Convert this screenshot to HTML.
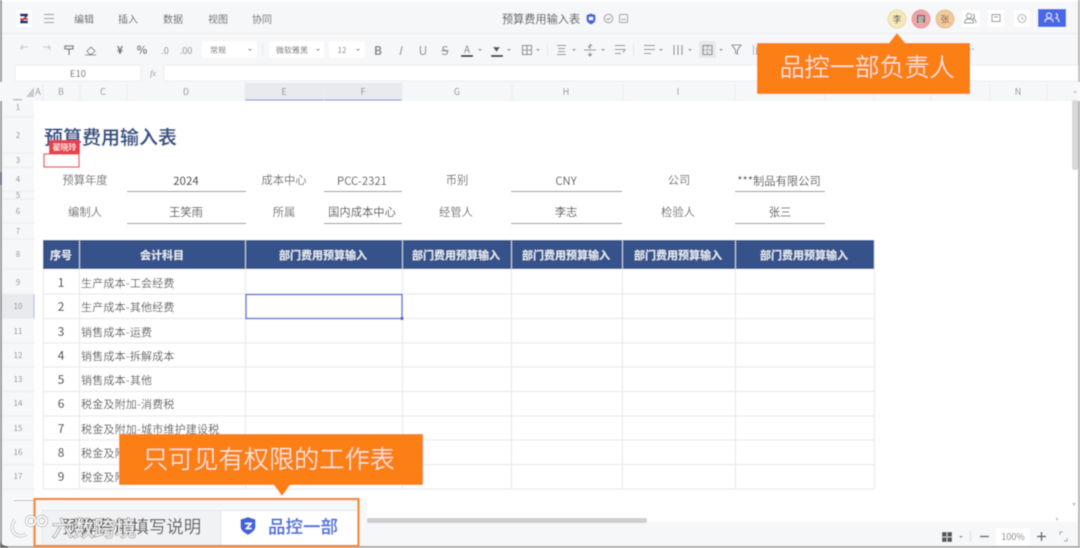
<!DOCTYPE html>
<html lang="zh"><head><meta charset="utf-8"><style>
html,body{margin:0;padding:0;background:#fff;width:1080px;height:548px;overflow:hidden}
svg{display:block;position:absolute;left:0;top:0}
text{font-family:"Noto Sans CJK SC","Liberation Sans",sans-serif}
.m{text-anchor:middle}
.t{fill:#585c63;font-size:10px}
.l{fill:#666;font-size:11.3px}
.v{fill:#444;font-size:11.3px}
.h{fill:#e8ecf4;font-size:11px;font-weight:700}
.n{fill:#555;font-size:12px;font-weight:500}
.c{fill:#555;font-size:11px;letter-spacing:.2px}
.r{fill:#8a8e95;font-size:8px}
.k{fill:#8a8e95;font-size:9px}
.s{stroke:#888;fill:none;stroke-width:1.1}
</style></head><body>
<svg width="1080" height="548" viewBox="0 0 1080 548" xmlns="http://www.w3.org/2000/svg">
<defs><filter id="b" x="0" y="0" width="100%" height="100%"><feGaussianBlur stdDeviation="0.5"/></filter></defs>
<g filter="url(#b)">
<rect width="1080" height="548" fill="#fff"/>
<rect y="2" width="1080" height="31" fill="#f6f7f9"/>
<rect y="33" width="1080" height="51" fill="#f6f7f9"/>
<line x1="0" y1="33.500" x2="1080" y2="33.500" stroke="#eceef1"/>
<rect x="0" y="0" width="2" height="548" fill="#9a9a9a"/>
<rect x="1078" y="0" width="2" height="548" fill="#b5b5b5"/>
<rect y="546" width="1080" height="2" fill="#aaa"/>

<!-- logo -->
<rect x="16" y="10" width="16" height="17" fill="#fff"/>
<path d="M20 13.500h8v2.500l-5 4.500h5v3h-8v-2.500l5-4.500h-5z" fill="#24357f"/><rect x="20" y="18" width="8" height="2" fill="#d8322c"/>
<path d="M44 14.500h10M44 18.500h10M44 22.500h10" stroke="#8a8e95"/>
<text x="84" y="23" class="m t">编辑</text>
<text x="128" y="23" class="m t">插入</text>
<text x="173" y="23" class="m t">数据</text>
<text x="218" y="23" class="m t">视图</text>
<text x="262" y="23" class="m t">协同</text>
<text x="541" y="23" class="m" style="font-size:11.200px;fill:#444">预算费用输入表</text>
<path d="M591 13.500l4.500 1.500v4.500c0 2.500-2 4-4.500 5c-2.500-1-4.500-2.500-4.500-5V15z" fill="#3f66e0"/><rect x="589" y="17" width="4" height="3" fill="#fff"/>
<circle cx="608.500" cy="18.500" r="4.300" fill="none" stroke="#999"/><path d="M606.500 18.500l1.500 1.500 2.500-2.500" stroke="#999" fill="none"/>
<rect x="619.500" y="14.500" width="8" height="8" rx="1" fill="none" stroke="#999"/><path d="M621 19.500h5" stroke="#999"/>

<!-- avatars -->
<circle cx="897" cy="19" r="9" fill="#f5e9bd" stroke="#ead9a0"/><text x="897" y="22.500" class="m" style="font-size:9px;fill:#444">李</text>
<circle cx="921" cy="19" r="9" fill="#efa4a8" stroke="#ea9296"/><rect x="917" y="15" width="8" height="8" rx="1" fill="#5a4a4a"/><text x="921" y="22" class="m" style="font-size:7px;fill:#eee">瞿</text>
<circle cx="945" cy="19" r="9" fill="#f1c99e" stroke="#eabb88"/><text x="945" y="22.500" class="m" style="font-size:9px;fill:#7a5c3a">张</text>
<rect x="962" y="10" width="18" height="17" fill="#fff"/>
<circle cx="969" cy="16" r="2.500" fill="none" stroke="#888"/><path d="M964.500 23c0-2.500 1.500-4 4.500-4s4.500 1.500 4.500 4zM973 14a2.500 2.500 0 0 1 0 4.500c1.500.5 3 2 3 4.500" fill="none" stroke="#888"/>
<rect x="988" y="10" width="16" height="17" fill="#fff"/><rect x="992" y="14.500" width="8" height="7" fill="none" stroke="#888"/><path d="M994 17h4" stroke="#888"/>
<rect x="1014" y="10" width="16" height="17" fill="#fff"/><circle cx="1022" cy="18.500" r="4" fill="none" stroke="#aaa"/><path d="M1022 16.500v2.500h2" stroke="#aaa" fill="none"/>
<rect x="1038" y="9" width="28" height="18" fill="#4a68e8"/><circle cx="1049" cy="15.500" r="2.500" fill="none" stroke="#dfe5fb"/><path d="M1045 22c0-2.500 1.500-3.500 4-3.500s4 1 4 3.500M1056 13.500a2.500 2.500 0 0 1 0 4.500c2 .5 3 1.500 3 4" fill="none" stroke="#dfe5fb"/>

<!-- toolbar -->
<path d="M21 50v-3h7M23 45l-2 2 2 2" stroke="#ccc" fill="none"/>
<path d="M50 50v-3h-7M48 45l2 2-2 2" stroke="#ccc" fill="none"/>
<path d="M65 46h8v3h-8zM69 49v6" stroke="#777" fill="none" stroke-width="1.300"/>
<path d="M87 51l4-4 4 4-3 3h-3zM85 55h11" stroke="#888" fill="none"/>
<text x="120" y="54" class="m" style="font-size:11px;fill:#666;font-weight:700">¥</text>
<text x="142" y="54" class="m" style="font-size:11px;fill:#666;font-weight:700">%</text>
<text x="165" y="54" class="m" style="font-size:9px;fill:#888">.0</text>
<text x="186" y="54" class="m" style="font-size:9px;fill:#888">.00</text>
<rect x="202" y="41" width="55" height="17" rx="2" fill="#fff"/><text x="218" y="53" class="m" style="font-size:8px;fill:#666">常规</text><path d="M248 49l2 2 2-2z" fill="#888"/>
<line x1="262.500" y1="44" x2="262.500" y2="55" stroke="#e3e5e8"/>
<rect x="269" y="41" width="55" height="17" rx="2" fill="#fff"/><text x="292" y="53" class="m" style="font-size:8px;fill:#666">微软雅黑</text><path d="M316 49l2 2 2-2z" fill="#888"/>
<rect x="329" y="41" width="36" height="17" rx="2" fill="#fff"/><text x="342" y="53" class="m" style="font-size:8px;fill:#777">12</text><path d="M356 49l2 2 2-2z" fill="#888"/>
<text x="378" y="55" class="m" style="font-size:12px;fill:#888;font-weight:700">B</text>
<text x="400" y="55" class="m" style="font-size:12px;fill:#888;font-style:italic">I</text>
<text x="423" y="55" class="m" style="font-size:12px;fill:#888">U</text>
<text x="445" y="55" class="m" style="font-size:12px;fill:#888;text-decoration:line-through">S</text>
<text x="467" y="53" class="m" style="font-size:10px;fill:#777">A</text><rect x="461" y="55" width="12" height="2" fill="#222"/><path d="M478 49l2 2 2-2z" fill="#888"/>
<path d="M493 47h7l-3.500 5z" fill="#555"/><rect x="491" y="55" width="12" height="2" fill="#222"/><path d="M507 49l2 2 2-2z" fill="#888"/>
<rect x="522.500" y="45.500" width="9" height="9" class="s"/><path d="M527 45.500v9M522.500 50h9" class="s"/><path d="M536 49l2 2 2-2z" fill="#888"/>
<line x1="547.500" y1="44" x2="547.500" y2="55" stroke="#e3e5e8"/>
<path d="M557 45.500h9M558 48.500h7M558 51.500h7M557 54.500h9" class="s"/><path d="M572 49l2 2 2-2z" fill="#888"/>
<path d="M590 44v4l-2-2M590 44l2 2M590 56v-4M588 54l2 2 2-2M584 50h12" class="s"/><path d="M601 49l2 2 2-2z" fill="#888"/>
<path d="M615 45.500h10M615 49.500h10l-2 3M615 53.500h6" class="s"/>
<line x1="633.500" y1="44" x2="633.500" y2="55" stroke="#e3e5e8"/>
<path d="M644 45.500h11M644 49.500h11M644 53.500h7" class="s"/><path d="M659 49l2 2 2-2z" fill="#888"/>
<path d="M674 45v10M678 45v10M682 45v10" class="s"/><path d="M688 49l2 2 2-2z" fill="#888"/>
<rect x="699" y="41" width="17" height="17" rx="1" fill="#e8e9eb"/><rect x="703" y="45.500" width="9" height="9" class="s"/><path d="M707.500 45.500v9M703 50h9" class="s" stroke-dasharray="2 1"/><path d="M719 49l2 2 2-2z" fill="#888"/>
<path d="M732 45h9l-3.500 5v4l-2 -1v-3z" class="s"/>
<path d="M753 45h1v10h-1zM756 47h1v8h-1z" fill="#aaa"/>
<circle cx="967" cy="49" r=".8" fill="#888"/><circle cx="970" cy="49" r=".8" fill="#888"/><circle cx="973" cy="49" r=".8" fill="#888"/>

<!-- formula bar -->
<rect x="15" y="65" width="126" height="16" rx="1" fill="#fff" stroke="#ecedef"/>
<text x="78" y="77" class="m" style="font-size:9.500px;fill:#666">E10</text>
<text x="153" y="76" class="m" style="font-size:8px;fill:#888;font-style:italic;font-family:'Liberation Serif',serif">fx</text>
<rect x="164" y="65" width="914" height="16" rx="1" fill="#fff" stroke="#ecedef"/>

<!-- col header -->
<rect x="0" y="82" width="1080" height="19" fill="#f6f7f9"/>
<rect x="245" y="83" width="157" height="17" fill="#e9eaee"/>
<rect x="245" y="99.500" width="157" height="1" fill="#6f86dd"/>
<path d="M43 84v16M80 84v16M127 84v16M245 84v16M324 84v16M402 84v16M512 84v16M623 84v16M735 84v16M825 84v16M874 84v16M931 84v16M990 84v16M1047 84v16" stroke="#ebecef"/>
<path d="M34 87l-8 10h8z" fill="#c9cbd0"/>
<rect x="13" y="99" width="9" height="1.500" fill="#bbb"/>
<text x="38" y="95" class="m k">A</text><text x="61" y="95" class="m k">B</text><text x="103" y="95" class="m k">C</text><text x="186" y="95" class="m k">D</text><text x="284" y="95" class="m k">E</text><text x="363" y="95" class="m k">F</text><text x="457" y="95" class="m k">G</text><text x="566" y="95" class="m k">H</text><text x="678" y="95" class="m k">I</text><text x="1018" y="95" class="m k">N</text>

<!-- row header -->
<rect x="2" y="101" width="32" height="445" fill="#f6f7f9"/>
<rect x="2" y="294" width="32" height="25" fill="#e9eaee"/>
<rect x="33.500" y="294" width="1" height="25" fill="#a9b6ec"/>
<rect x="0" y="172" width="2" height="13" fill="#5c6680"/>
<path d="M2 117h32M2 153h32M2 167.500h32M2 191h32M2 199h32M2 223h32M2 239h32M2 269h32M2 294h32M2 318.500h32M2 343h32M2 367h32M2 391.500h32M2 416h32M2 440h32M2 464.500h32M2 489h32" stroke="#ebecef"/>
<text x="18" y="110" class="m r">1</text><text x="18" y="138" class="m r">2</text><text x="18" y="163" class="m r">3</text><text x="18" y="182" class="m r">4</text><text x="18" y="198" class="m r">5</text><text x="18" y="214" class="m r">6</text><text x="18" y="234" class="m r">7</text><text x="18" y="257" class="m r">8</text><text x="18" y="285" class="m r">9</text><text x="18" y="309" class="m r">10</text><text x="18" y="334" class="m r">11</text><text x="18" y="358" class="m r">12</text><text x="18" y="382" class="m r">13</text><text x="18" y="406" class="m r">14</text><text x="18" y="431" class="m r">15</text><text x="18" y="455" class="m r">16</text><text x="18" y="479" class="m r">17</text>
<rect x="14" y="498" width="20" height="2" fill="#fff"/>
<rect x="14" y="500" width="20" height="1" fill="#bbb"/>

<!-- title -->
<text x="44" y="144" style="font-size:19px;font-weight:700;fill:#34528a">预算费用输入表</text>
<rect x="44" y="154" width="35" height="13" fill="#fff" stroke="#e8505b" stroke-width="1.300"/>
<rect x="49" y="140" width="31" height="14" fill="#e8404e"/>
<text x="64.500" y="150" class="m" style="font-size:8px;fill:#fff">翟晓玲</text>

<!-- form -->
<text x="85" y="184" class="m l">预算年度</text>
<text x="186" y="185" class="m v" style="font-weight:500">2024</text>
<text x="284" y="184" class="m l">成本中心</text>
<text x="362" y="185" class="m v">PCC-2321</text>
<text x="457" y="184" class="m l">币别</text>
<text x="566" y="185" class="m v">CNY</text>
<text x="679" y="184" class="m l">公司</text>
<text x="779" y="185" class="m v">***制品有限公司</text>
<text x="85" y="216" class="m l">编制人</text>
<text x="186" y="216" class="m v">王笑雨</text>
<text x="284" y="216" class="m l">所属</text>
<text x="362" y="216" class="m v">国内成本中心</text>
<text x="456" y="216" class="m l">经管人</text>
<text x="566" y="216" class="m v">李志</text>
<text x="678" y="216" class="m l">检验人</text>
<text x="780" y="216" class="m v">张三</text>
<path d="M127 191.500h119M324 191.500h78M511 191.500h111M735 191.500h90M127 223.500h119M324 223.500h78M511 223.500h111M735 223.500h90" stroke="#8d8d8d" stroke-width="1.100"/>

<!-- table -->
<rect x="43" y="240" width="831" height="29" fill="#34528a"/>
<path d="M79.500 240v29M245.500 240v29M402.500 240v29M511.500 240v29M622.500 240v29M735.500 240v29" stroke="#c4cfe2"/>
<text x="61" y="259" class="m h">序号</text><text x="162" y="259" class="m h">会计科目</text>
<text x="323" y="259" class="m h">部门费用预算输入</text><text x="456" y="259" class="m h">部门费用预算输入</text><text x="566" y="259" class="m h">部门费用预算输入</text><text x="678" y="259" class="m h">部门费用预算输入</text><text x="804" y="259" class="m h">部门费用预算输入</text>
<path d="M43.500 269v220M79.500 269v220M245.500 269v220M402.500 269v220M511.500 269v220M622.500 269v220M735.500 269v220M874.500 240v249M43 294h831M43 318.500h831M43 343h831M43 367h831M43 391.500h831M43 416h831M43 440h831M43 464.500h831M43 489h831" stroke="#e6e7ea"/>
<text x="61" y="287" class="m n">1</text><text x="61" y="311" class="m n">2</text><text x="61" y="336" class="m n">3</text><text x="61" y="360" class="m n">4</text><text x="61" y="384" class="m n">5</text><text x="61" y="408" class="m n">6</text><text x="61" y="433" class="m n">7</text><text x="61" y="457" class="m n">8</text><text x="61" y="481" class="m n">9</text>
<text x="81" y="287" class="c">生产成本-工会经费</text><text x="81" y="311" class="c">生产成本-其他经费</text><text x="81" y="336" class="c">销售成本-运费</text><text x="81" y="360" class="c">销售成本-拆解成本</text><text x="81" y="384" class="c">销售成本-其他</text><text x="81" y="408" class="c">税金及附加-消费税</text><text x="81" y="433" class="c">税金及附加-城市维护建设税</text><text x="81" y="457" class="c">税金及附加</text><text x="81" y="481" class="c">税金及附加</text>
<rect x="246" y="294.500" width="156" height="24" fill="#fff" stroke="#6478d8" stroke-width="1.500"/>
<rect x="400.500" y="317" width="3" height="3" fill="#4a60cc"/>

<!-- scroll -->
<rect x="1072" y="100" width="6" height="70" rx="2" fill="#d9d9d9"/>
<path d="M1073 93l2-3 2 3z" fill="#ccc"/><path d="M1072 503l2 3 2-3z" fill="#bbb"/>
<path d="M1056 517l3 2-3 2z" fill="#ccc"/>

<!-- bottom bar -->
<rect x="2" y="522" width="1076" height="24" fill="#f6f7f9"/>
<rect x="367" y="518" width="280" height="5" rx="2" fill="#cfcfcf"/>
<rect x="942" y="532" width="10" height="10" fill="#555"/><path d="M947 532v10M942 537h10" stroke="#ccc"/>
<path d="M959 536l2 2 2-2z" fill="#888"/>
<line x1="970.500" y1="531" x2="970.500" y2="542" stroke="#ddd"/>
<path d="M980 536.500h9" stroke="#666" stroke-width="1.500"/>
<rect x="996" y="528" width="34" height="17" fill="#fff"/>
<text x="1013" y="540" class="m" style="font-size:9px;fill:#777">100%</text>
<path d="M1037 536.500h9M1041.500 532v9" stroke="#666" stroke-width="1.500"/>
<path d="M1060 535v-3h3M1067 538v3h-3" stroke="#999" fill="none"/>

<!-- sheet tabs -->
<rect x="34" y="499" width="333" height="47" fill="#f6f7f9"/>
<rect x="42" y="510" width="178" height="36" fill="#f1f2f4"/>
<rect x="220" y="510" width="137" height="36" fill="#fff"/>
<path d="M42.500 510v36M220.500 510v36M42 510.500h315" stroke="#e3e4e7"/>
<rect x="34.500" y="499" width="324" height="47" fill="none" stroke="#f2892e" stroke-width="2.300"/>
<text x="62" y="533" style="font-size:17.400px;fill:#555">预算费用填写说明</text>
<text x="52" y="536" style="font-size:21px;fill:none;stroke:#555;stroke-opacity:.55;stroke-width:1.500">六数跨境</text>
<text x="52" y="536" style="font-size:21px;fill:#fff;fill-opacity:.9">六数跨境</text>
<path d="M248 517l7.500 2.500v7c0 3.500-3 6-7.500 8.500c-4.500-2.500-7.500-5-7.500-8.500v-7z" fill="#4364d8"/><path d="M245 523.500h6l-4.500 5h5" stroke="#fff" fill="none" stroke-width="1.400"/>
<text x="268" y="533" style="font-size:17.500px;font-weight:700;fill:#5476db">品控一部</text>
<!-- watermark logo -->
<g fill="none" stroke="#555" stroke-opacity=".45" stroke-width="3.200"><path d="M15 520c-3 3-4 9-1 13c3 3 8 4 12 1"/><circle cx="31" cy="521" r="4.500"/><circle cx="42" cy="521" r="4.500"/></g>
<g fill="none" stroke="#fff" stroke-width="1.800"><path d="M15 520c-3 3-4 9-1 13c3 3 8 4 12 1"/><circle cx="31" cy="521" r="4.500"/><circle cx="42" cy="521" r="4.500"/></g>
<path d="M0 540q1 6 8 6v2H0z" fill="#666"/>

<!-- callouts -->
<rect x="757" y="43" width="213" height="51" fill="#fc7f15"/>
<path d="M897 33l8 10h-16z" fill="#fc7f15"/>
<text x="867" y="76" class="m" style="font-size:25px;fill:#fbeee0;font-weight:300">品控一部负责人</text>
<rect x="119" y="434" width="304" height="51" fill="#fc7f15"/>
<path d="M274 485h16l-8 11z" fill="#fc7f15"/>
<text x="269" y="468" class="m" style="font-size:25px;fill:#fbeee0;font-weight:300;letter-spacing:.2px">只可见有权限的工作表</text>
</g>
</svg>
</body></html>
